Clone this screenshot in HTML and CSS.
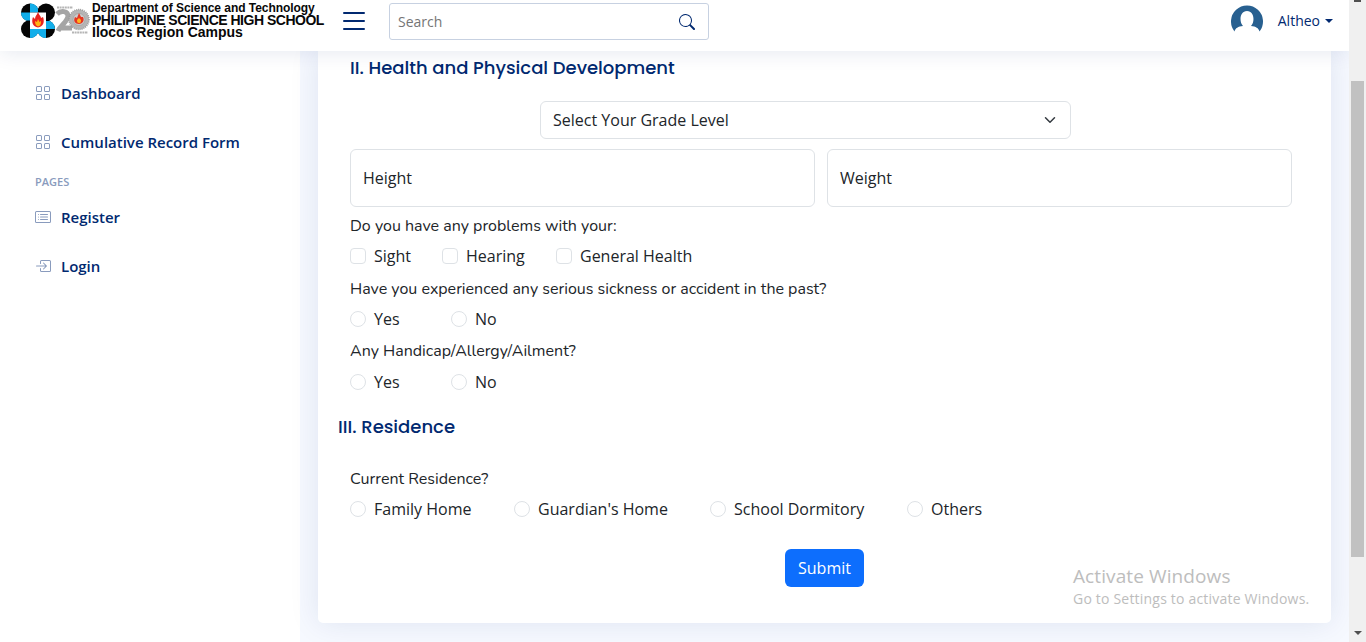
FILE: index.html
```html
<!DOCTYPE html>
<html lang="en">
<head>
<meta charset="utf-8">
<title>Cumulative Record Form</title>
<link rel="stylesheet" href="styles.css">
</head>
<body>
<div class="window">
  <div class="app">
    <header class="header">
      <a class="brand">
        <svg class="brand-logo" width="72" height="42" viewBox="0 0 72 42">
          <g fill="#050505"><circle cx="11" cy="12.500" r="9"/><circle cx="27" cy="12.500" r="9"/><circle cx="11" cy="29" r="9"/><circle cx="27" cy="29" r="9"/></g>
          <g fill="#12aeea">
            <path d="M11 12.500V3.500A9 9 0 0 1 19 8.500V12.500ZM11 12.500H2A9 9 0 0 0 7 20.500H11Z"/>
            <path d="M27 29H36A9 9 0 0 0 31 21H27ZM27 29V38A9 9 0 0 1 19 33V29Z"/>
            <path d="M11 29V38A9 9 0 0 0 19 33V29Z"/>
          </g>
          <path fill="#fff" d="M11 12.500H27V29H11Z"/>
          <path fill="#e9231d" d="M19 12C20 15 22 16 22 18L24 17C26 22 24 27 19 27.500C14 27 12 22 14 17L16 19C16 16 18 15 19 12Z"/>
          <path fill="#ffb414" d="M19 19L20.500 22L22 21C22 25 21 26 19 26.500C17 26 16 24 16 21L18 22Z"/>
          <path fill="none" stroke="#b5b5b5" stroke-width="2" stroke-dasharray="2 .6" d="M38 7.500H54M53 32.500H69"/>
          <path fill="none" stroke="#a5a5a5" stroke-width="5" d="M38 14C42 10 49 11 49 16C49 21 42 25 39 31M41 28H53"/>
          <circle cx="60" cy="19.500" r="10" fill="#b5b5b5" stroke="#999" stroke-width="1.500" stroke-dasharray="1 1"/>
          <circle cx="60" cy="19.500" r="6" fill="#ccc" stroke="#999" stroke-width=".6"/>
          <path fill="#e53620" d="M60 13L62 17L64 17C66 21 63 24 60 24C56 24 54 21 56 17L58 18Z"/>
          <path fill="#ffb321" d="M60 18L62 20C62 23 61 23 60 23C58 23 58 21 58 20Z"/>
        </svg>
        <span class="brand-text"><span class="brand-a">Department of Science and Technology</span><span class="brand-b">PHILIPPINE SCIENCE HIGH SCHOOL</span><span class="brand-c">Ilocos Region Campus</span></span>
      </a>
      <svg class="menu" width="32" height="32" viewBox="0 0 16 16" fill="#012970"><path d="M2.500 12a.5.5 0 0 1 .5-.5h10a.5.5 0 0 1 0 1H3a.5.5 0 0 1-.5-.5zm0-4a.5.5 0 0 1 .5-.5h10a.5.5 0 0 1 0 1H3a.5.5 0 0 1-.5-.5zm0-4a.5.5 0 0 1 .5-.5h10a.5.5 0 0 1 0 1H3a.5.5 0 0 1-.5-.5z"/></svg>
      <div class="search"><span>Search</span>
        <svg width="16" height="16" viewBox="0 0 16 16" fill="#012970"><path d="M11.742 10.344a6.500 6.500 0 1 0-1.397 1.398h-.001c.03.04.062.078.098.115l3.850 3.850a1 1 0 0 0 1.415-1.414l-3.850-3.850a1.007 1.007 0 0 0-.115-.1zM12 6.500a5.500 5.500 0 1 1-11 0 5.500 5.500 0 0 1 11 0z"/></svg>
      </div>
      <div class="profile">
        <svg width="34" height="36" viewBox="0 0 34 36"><path fill="#286090" d="M3.500 28.500A16 16 0 1 1 28.500 28.500C27.500 25 25 23.500 20 23C24 19 23.500 8 16 8C8.500 8 8 19 12 23C7 23.500 4.500 25 3.500 28.500Z"/></svg>
        <span>Altheo</span><i class="caret"></i>
      </div>
    </header>
    <div class="body">
      <nav class="sidebar">
        <a class="nav-item"><svg class="nav-icon" viewBox="0 0 16 16"><path d="M1 2.500A1.500 1.500 0 0 1 2.500 1h3A1.500 1.500 0 0 1 7 2.500v3A1.500 1.500 0 0 1 5.500 7h-3A1.500 1.500 0 0 1 1 5.500v-3zM2.500 2a.5.5 0 0 0-.5.5v3a.5.5 0 0 0 .5.5h3a.5.5 0 0 0 .5-.5v-3a.5.5 0 0 0-.5-.5h-3zm6.500.5A1.500 1.500 0 0 1 10.500 1h3A1.500 1.500 0 0 1 15 2.500v3A1.500 1.500 0 0 1 13.500 7h-3A1.500 1.500 0 0 1 9 5.500v-3zm1.500-.5a.5.5 0 0 0-.5.5v3a.5.5 0 0 0 .5.5h3a.5.5 0 0 0 .5-.5v-3a.5.5 0 0 0-.5-.5h-3zM1 10.500A1.500 1.500 0 0 1 2.500 9h3A1.500 1.500 0 0 1 7 10.500v3A1.500 1.500 0 0 1 5.500 15h-3A1.500 1.500 0 0 1 1 13.500v-3zm1.500-.5a.5.5 0 0 0-.5.5v3a.5.5 0 0 0 .5.5h3a.5.5 0 0 0 .5-.5v-3a.5.5 0 0 0-.5-.5h-3zm6.500.5A1.500 1.500 0 0 1 10.500 9h3a1.500 1.500 0 0 1 1.500 1.500v3a1.500 1.500 0 0 1-1.500 1.500h-3A1.500 1.500 0 0 1 9 13.500v-3zm1.500-.5a.5.5 0 0 0-.5.5v3a.5.5 0 0 0 .5.5h3a.5.5 0 0 0 .5-.5v-3a.5.5 0 0 0-.5-.5h-3z"/></svg><span>Dashboard</span></a>
        <a class="nav-item"><svg class="nav-icon" viewBox="0 0 16 16"><path d="M1 2.500A1.500 1.500 0 0 1 2.500 1h3A1.500 1.500 0 0 1 7 2.500v3A1.500 1.500 0 0 1 5.500 7h-3A1.500 1.500 0 0 1 1 5.500v-3zM2.500 2a.5.5 0 0 0-.5.5v3a.5.5 0 0 0 .5.5h3a.5.5 0 0 0 .5-.5v-3a.5.5 0 0 0-.5-.5h-3zm6.500.5A1.500 1.500 0 0 1 10.500 1h3A1.500 1.500 0 0 1 15 2.500v3A1.500 1.500 0 0 1 13.500 7h-3A1.500 1.500 0 0 1 9 5.500v-3zm1.500-.5a.5.5 0 0 0-.5.5v3a.5.5 0 0 0 .5.5h3a.5.5 0 0 0 .5-.5v-3a.5.5 0 0 0-.5-.5h-3zM1 10.500A1.500 1.500 0 0 1 2.500 9h3A1.500 1.500 0 0 1 7 10.500v3A1.500 1.500 0 0 1 5.500 15h-3A1.500 1.500 0 0 1 1 13.500v-3zm1.500-.5a.5.5 0 0 0-.5.5v3a.5.5 0 0 0 .5.5h3a.5.5 0 0 0 .5-.5v-3a.5.5 0 0 0-.5-.5h-3zm6.500.5A1.500 1.500 0 0 1 10.500 9h3a1.500 1.500 0 0 1 1.500 1.500v3a1.500 1.500 0 0 1-1.500 1.500h-3A1.500 1.500 0 0 1 9 13.500v-3zm1.500-.5a.5.5 0 0 0-.5.5v3a.5.5 0 0 0 .5.5h3a.5.5 0 0 0 .5-.5v-3a.5.5 0 0 0-.5-.5h-3z"/></svg><span>Cumulative Record Form</span></a>
        <div class="nav-heading">PAGES</div>
        <a class="nav-item"><svg class="nav-icon" viewBox="0 0 16 16"><path d="M14.500 3a.5.5 0 0 1 .5.5v9a.5.5 0 0 1-.5.5h-13a.5.5 0 0 1-.5-.5v-9a.5.5 0 0 1 .5-.5h13zm-13-1A1.500 1.500 0 0 0 0 3.500v9A1.500 1.500 0 0 0 1.500 14h13a1.500 1.500 0 0 0 1.500-1.500v-9A1.500 1.500 0 0 0 14.500 2h-13z"/><path d="M5 8a.5.5 0 0 1 .5-.5h7a.5.5 0 0 1 0 1h-7A.5.5 0 0 1 5 8zm0-2.500a.5.5 0 0 1 .5-.5h7a.5.5 0 0 1 0 1h-7a.5.5 0 0 1-.5-.5zm0 5a.5.5 0 0 1 .5-.5h7a.5.5 0 0 1 0 1h-7a.5.5 0 0 1-.5-.5zm-1-5a.5.5 0 1 1-1 0 .5.5 0 0 1 1 0zM4 8a.5.5 0 1 1-1 0 .5.5 0 0 1 1 0zm0 2.500a.5.5 0 1 1-1 0 .5.5 0 0 1 1 0z"/></svg><span>Register</span></a>
        <a class="nav-item"><svg class="nav-icon" viewBox="0 0 16 16"><path d="M6 3.500a.5.5 0 0 1 .5-.5h8a.5.5 0 0 1 .5.5v9a.5.5 0 0 1-.5.5h-8a.5.5 0 0 1-.5-.5v-2a.5.5 0 0 0-1 0v2A1.500 1.500 0 0 0 6.500 14h8a1.500 1.500 0 0 0 1.500-1.500v-9A1.500 1.500 0 0 0 14.500 2h-8A1.500 1.500 0 0 0 5 3.500v2a.5.5 0 0 0 1 0v-2z"/><path d="M11.854 8.354a.5.5 0 0 0 0-.708l-3-3a.5.5 0 1 0-.708.708L10.293 7.500H1.500a.5.5 0 0 0 0 1h8.793l-2.147 2.146a.5.5 0 0 0 .708.708l3-3z"/></svg><span>Login</span></a>
      </nav>
      <main class="main">
        <form class="card">
          <h5 class="title"><span>II. Health and Physical Development</span></h5>
          <div class="select"><span>Select Your Grade Level</span><svg width="16" height="12" viewBox="0 0 16 16"><path fill="none" stroke="#343a40" stroke-linecap="round" stroke-linejoin="round" stroke-width="2" d="m2 5 6 6 6-6"/></svg></div>
          <div class="fields"><div class="field">Height</div><div class="field">Weight</div></div>
          <div class="question"><span>Do you have any problems with your:</span></div>
          <div class="options problems"><label><i class="box"></i>Sight</label><label><i class="box"></i>Hearing</label><label><i class="box"></i>General Health</label></div>
          <div class="question sick"><span>Have you experienced any serious sickness or accident in the past?</span></div>
          <div class="options yesno"><label><i class="box radio"></i>Yes</label><label><i class="box radio"></i>No</label></div>
          <div class="question ailment"><span>Any Handicap/Allergy/Ailment?</span></div>
          <div class="options yesno late"><label><i class="box radio"></i>Yes</label><label><i class="box radio"></i>No</label></div>
          <h5 class="title residence"><span>III. Residence</span></h5>
          <div class="question current"><span>Current Residence?</span></div>
          <div class="options homes"><label><i class="box radio"></i>Family Home</label><label><i class="box radio"></i>Guardian's Home</label><label><i class="box radio"></i>School Dormitory</label><label><i class="box radio"></i>Others</label></div>
          <button class="submit" type="button">Submit</button>
        </form>
      </main>
    </div>
  </div>
  <div class="scrollbar"><i class="arrow-up"></i><i class="thumb"></i><i class="arrow-down"></i></div>
  <div class="watermark"><div class="wm-title">Activate Windows</div><div class="wm-text">Go to Settings to activate Windows.</div></div>
</div>
</body>
</html>
```

FILE: styles.css
```css
* { box-sizing: border-box; }
body { margin: 0; height: 642px; overflow: hidden; background: #f6f9ff; color: #212529; font: 16px/24px "Open Sans", sans-serif; }
svg { display: block; flex: none; }
span, label { white-space: nowrap; }
.window { position: relative; display: flex; height: 642px; }
.app { width: 1349px; display: flex; flex-direction: column; overflow: hidden; }

.header { position: relative; z-index: 2; height: 51px; flex: none; display: flex; align-items: flex-start; background: #fff; box-shadow: 0 2px 20px rgba(1,41,112,.1); }
.brand { width: 338px; display: flex; padding-left: 19px; }
.brand-text { display: flex; flex-direction: column; padding: 2px 0 0 1px; color: #080808; font: bold 12px/12px "Liberation Sans", sans-serif; }
.brand-a { font-size: 12px; letter-spacing: -.05px; }
.brand-b { font-size: 14px; line-height: 13px; letter-spacing: -.49px; }
.brand-c { font-size: 14px; line-height: 10px; letter-spacing: 0; }
.menu { margin-top: 5px; }
.search { width: 320px; height: 37px; margin: 3px 0 0 19px; padding: 0 13px 0 8px; display: flex; align-items: center; justify-content: space-between; border: 1px solid #c7d1e1; border-radius: 3px; color: #757575; font-size: 14px; }
.profile { margin: 3px 16px 0 auto; display: flex; color: #012970; font-size: 14px; font-weight: 500; line-height: 36px; }
.profile span { margin-left: 13px; }
.caret { align-self: center; margin-left: 5px; border: 4px solid transparent; border-top-color: #012970; border-bottom: 0; }

.body { flex: 1; display: flex; min-height: 0; }
.sidebar { width: 300px; flex: none; padding: 22px 20px; background: #fff; box-shadow: 0 0 20px rgba(1,41,112,.1); }
.nav-item { display: flex; align-items: center; height: 40px; margin-bottom: 9px; padding-left: 15px; color: #012970; font-size: 15px; font-weight: 600; }
.nav-icon { width: 16px; height: 16px; margin-right: 10px; fill: #899bbd; }
.nav-heading { margin: 0 0 5px 15px; color: #899bbd; font-size: 11px; font-weight: 600; line-height: 21px; }

.main { flex: 1; padding: 0 18px; background: #f6f9ff; }
.card { height: 572px; padding: 5px 39px 0 32px; display: flex; flex-direction: column; background: #fff; border-radius: 0 0 5px 5px; box-shadow: 0 0 30px rgba(1,41,112,.1); }
.title { margin: 0; height: 24px; color: #012970; font: 500 18px/24px Poppins, Inter, sans-serif; }
.select { width: 531px; height: 38px; margin: 21px 0 10px 190px; padding: 0 12px; display: flex; align-items: center; justify-content: space-between; border: 1px solid #dee2e6; border-radius: 6px; }
.fields { display: grid; grid-template-columns: 1fr 1fr; gap: 12px; }
.field { height: 58px; padding: 0 12px; border: 1px solid #dee2e6; border-radius: 6px; line-height: 56px; }
.question { height: 24px; margin-top: 7px; color: #212529; font-family: Nunito, Lato, sans-serif; font-size: 16px; }
.question.sick { margin-top: 9px; }
.question.ailment { margin-top: 8px; }
.question.current { margin-top: 28px; }
.options { display: grid; height: 24px; margin-top: 6px; }
.options label { display: flex; align-items: center; }
.options.late { margin-top: 7px; }
.problems { grid-template-columns: 92px 114px auto; }
.yesno { grid-template-columns: 101px auto; }
.homes { grid-template-columns: 164px 196px 197px auto; }
.box { width: 16px; height: 16px; margin-right: 8px; border: 1px solid #dee2e6; border-radius: 4px; }
.radio { border-radius: 50%; }
.residence { margin: 21px 0 0 -12px; }
.submit { width: 79px; height: 38px; margin: 28px 0 0 435px; padding: 0; border: 0; border-radius: 6px; background: #0d6efd; color: #fff; font: 16px/38px "Open Sans", sans-serif; }

.scrollbar { width: 17px; height: 642px; padding-left: 2px; display: flex; flex-direction: column; background: #f0f0f0; }
.arrow-up { width: 7px; height: 2px; margin-left: 3px; background: #505050; }
.thumb { width: 13px; height: 476px; margin-top: 79px; background: #c1c1c1; }
.arrow-down { margin: 74px 0 0 3px; width: 0; border: 4px solid transparent; border-top-color: #505050; border-bottom: 0; }
.watermark { position: absolute; left: 1073px; top: 564px; color: #bdbdbd; white-space: nowrap; }
.wm-title { font-size: 19px; letter-spacing: .1px; }
.wm-text { font-size: 14px; line-height: 22px; letter-spacing: .2px; }
```
